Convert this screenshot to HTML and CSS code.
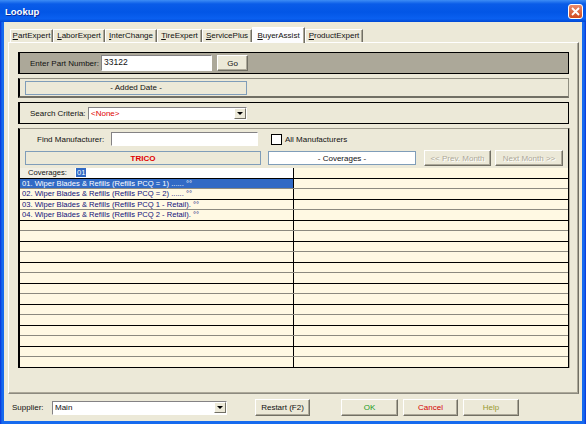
FILE: index.html
```html
<!DOCTYPE html>
<html>
<head>
    <meta charset="utf-8" />
    <title>Lookup</title>
    <link rel="stylesheet" href="styles.css">
</head>
<body>
<div class="window">
    <div class="titlebar">
        <span class="title">Lookup</span>
        <span class="close">
            <svg width="9" height="9" viewBox="0 0 9 9"><path d="M1 1 L8 8 M8 1 L1 8" stroke="#fff" stroke-width="1.8" fill="none"/></svg>
        </span>
    </div>
    <div class="client">
        <div class="tabs">
            <span class="tab w43"><u>P</u>artExpert</span>
            <span class="tab w52"><u>L</u>aborExpert</span>
            <span class="tab w52"><u>I</u>nterChange</span>
            <span class="tab w45"><u>T</u>ireExpert</span>
            <span class="tab w50"><u>S</u>ervicePlus</span>
            <span class="tab w53 active"><u>B</u>uyerAssist</span>
            <span class="tab w58"><u>P</u>roductExpert</span>
        </div>
        <div class="panel">
            <div class="bar part">
                <span class="label part-label">Enter Part Number:</span>
                <span class="field part-field">33122</span>
                <span class="button go">Go</span>
            </div>
            <div class="bar date">
                <span class="flat date-field">- Added Date -</span>
            </div>
            <div class="bar search">
                <span class="label search-label">Search Criteria:</span>
                <span class="combo search-combo"><span class="combo-text red">&lt;None&gt;</span><span class="drop"></span></span>
            </div>
            <div class="lower">
                <div class="find-row">
                    <span class="label find-label">Find Manufacturer:</span>
                    <span class="field find-field"></span>
                    <span class="check"></span>
                    <span class="label">All Manufacturers</span>
                </div>
                <div class="info-row">
                    <span class="flat trico">TRICO</span>
                    <span class="flat coverages">- Coverages -</span>
                    <span class="button disabled prev">&lt;&lt; Prev. Month</span>
                    <span class="button disabled next">Next Month &gt;&gt;</span>
                </div>
                <div class="list">
                    <div class="row head">
                        <div class="cell left"><span class="head-label">Coverages:</span><span class="head-input"><span class="sel">01</span></span></div>
                        <div class="cell right"></div>
                    </div>
                    <div class="row"><div class="cell left selected">01. Wiper Blades &amp; Refills (Refills PCQ = 1) ...... °°</div><div class="cell right"></div></div>
                    <div class="row"><div class="cell left">02. Wiper Blades &amp; Refills (Refills PCQ = 2) ...... °°</div><div class="cell right"></div></div>
                    <div class="row"><div class="cell left">03. Wiper Blades &amp; Refills (Refills PCQ 1 - Retail). °°</div><div class="cell right"></div></div>
                    <div class="row"><div class="cell left">04. Wiper Blades &amp; Refills (Refills PCQ 2 - Retail). °°</div><div class="cell right"></div></div>
                    <div class="row"><div class="cell left"></div><div class="cell right"></div></div>
                    <div class="row"><div class="cell left"></div><div class="cell right"></div></div>
                    <div class="row"><div class="cell left"></div><div class="cell right"></div></div>
                    <div class="row"><div class="cell left"></div><div class="cell right"></div></div>
                    <div class="row"><div class="cell left"></div><div class="cell right"></div></div>
                    <div class="row"><div class="cell left"></div><div class="cell right"></div></div>
                    <div class="row"><div class="cell left"></div><div class="cell right"></div></div>
                    <div class="row"><div class="cell left"></div><div class="cell right"></div></div>
                    <div class="row"><div class="cell left"></div><div class="cell right"></div></div>
                    <div class="row"><div class="cell left"></div><div class="cell right"></div></div>
                    <div class="row"><div class="cell left"></div><div class="cell right"></div></div>
                    <div class="row"><div class="cell left"></div><div class="cell right"></div></div>
                    <div class="row"><div class="cell left"></div><div class="cell right"></div></div>
                    <div class="row"><div class="cell left"></div><div class="cell right"></div></div>
                </div>
            </div>
        </div>
        <div class="footer">
            <span class="label supplier-label">Supplier:</span>
            <span class="combo supplier-combo"><span class="combo-text">Main</span><span class="drop"></span></span>
            <span class="button restart">Restart (F2)</span>
            <span class="button ok">OK</span>
            <span class="button cancel">Cancel</span>
            <span class="button help">Help</span>
        </div>
    </div>
</div>
</body>
</html>
```

FILE: styles.css
```css
* {
    box-sizing: border-box;
}
body {
    margin: 0;
    background: #fff;
    font-family: "Liberation Sans", Arial, sans-serif;
    font-size: 8px;
    color: #111;
}
.window {
    width: 586px;
    height: 424px;
    display: flex;
    flex-direction: column;
    background: linear-gradient(to right, #0831d9 0, #166aee 2px, #166aee 584px, #0831d9 586px);
}
.titlebar {
    height: 22px;
    display: flex;
    align-items: center;
    justify-content: space-between;
    padding: 0 3px 0 5px;
    background: linear-gradient(#3d8df5 0, #0a5ce8 18%, #0256e6 55%, #0a60f0 85%, #0048d4 100%);
}
.title {
    color: #fff;
    font-weight: bold;
    font-size: 9.5px;
    text-shadow: 1px 1px #0a2a9a;
}
.close {
    width: 15px;
    height: 15px;
    display: flex;
    align-items: center;
    justify-content: center;
    border: 1px solid #fff;
    border-radius: 3px;
    background: linear-gradient(#e98b6c, #d14a1e);
}
.client {
    flex: 1;
    margin: 0 4px 3px 4px;
    padding: 5px 3px 0 4px;
    background: #ece9d8;
    display: flex;
    flex-direction: column;
}

/* tabs */
.tabs {
    height: 15px;
    display: flex;
    align-items: flex-end;
    padding-left: 2px;
    position: relative;
    z-index: 1;
}
.tab {
    height: 13px;
    line-height: 12px;
    text-align: center;
    background: #ece9d8;
    border-top: 1px solid #fff;
    border-left: 1px solid #fff;
    border-right: 1px solid #716f64;
    box-shadow: inset -1px 0 #aca899;
    white-space: nowrap;
}
.tab.active {
    height: 16px;
    margin-bottom: -1px;
    line-height: 15px;
    background: #fcfcfe;
}
.w43 { width: 43px; }
.w45 { width: 45px; }
.w50 { width: 50px; }
.w52 { width: 52px; }
.w53 { width: 53px; }
.w58 { width: 58px; }

.panel {
    height: 352px;
    padding: 9px;
    border: 1px solid;
    border-color: #fff #716f64 #8c8a7f #fff;
    box-shadow: inset -1px -1px #aca899;
}

/* top bars */
.bar {
    display: flex;
    align-items: center;
    border: 1px solid #000;
    border-left-width: 2px;
    margin-bottom: 4px;
}
.part {
    height: 22px;
    background: #aca899;
    padding-left: 10px;
}
.date {
    height: 20px;
    border-color: #8f8d80 #8f8d80 #716f64 #000;
    border-bottom-width: 2px;
    padding-left: 5px;
}
.search {
    height: 22px;
    padding-left: 10px;
}
.label {
    white-space: nowrap;
}
.part-label {
    width: 71px;
}
.search-label {
    width: 58px;
}
.field {
    background: #fff;
    border: 1px solid;
    border-color: #848284 #fff #fff #848284;
    padding-left: 2px;
    line-height: 12px;
    height: 16px;
    font-size: 8.5px;
}
.part-field {
    width: 111px;
}
.button {
    display: flex;
    align-items: center;
    justify-content: center;
    height: 17px;
    background: #ece9d8;
    border: 1px solid;
    border-color: #fff #716f64 #716f64 #fff;
    box-shadow: inset -1px -1px #aca899;
    white-space: nowrap;
}
.go {
    width: 31px;
    height: 16px;
    margin-left: 5px;
}
.flat {
    display: flex;
    align-items: center;
    justify-content: center;
    height: 14px;
    border: 1px solid #7f9db9;
    background: #ece9d8;
}
.date-field {
    width: 222px;
}
.combo {
    display: flex;
    align-items: center;
    height: 13px;
    background: #fff;
    border: 1px solid;
    border-color: #848284 #fff #fff #848284;
}
.combo-text {
    flex: 1;
    padding-left: 2px;
}
.red {
    color: #e00000;
}
.drop {
    width: 12px;
    height: 11px;
    background: #ece9d8;
    border: 1px solid;
    border-color: #fff #716f64 #716f64 #fff;
    display: flex;
    align-items: center;
    justify-content: center;
}
.drop:after {
    content: "";
    border-left: 3px solid transparent;
    border-right: 3px solid transparent;
    border-top: 3px solid #000;
}
.search-combo {
    width: 159px;
}

/* lower section */
.lower {
    height: 240px;
    border-top: 1px solid #9d9a8c;
    border-left: 2px solid #000;
    border-right: 1px solid #000;
    box-shadow: 1px 0 #aca899;
    padding-top: 3px;
}
.find-row {
    height: 14px;
    display: flex;
    align-items: center;
    padding-left: 17px;
}
.find-label {
    width: 74px;
}
.find-field {
    width: 147px;
    height: 14px;
}
.check {
    width: 11px;
    height: 11px;
    margin: 0 3px 0 13px;
    border: 1px solid #000;
    background: #fff;
}
.info-row {
    height: 16px;
    margin-top: 4px;
    display: flex;
    align-items: center;
    padding-left: 5px;
}
.trico {
    width: 236px;
    color: #e00000;
    font-weight: bold;
}
.coverages {
    width: 148px;
    margin-left: 7px;
    background: #fff;
}
.disabled {
    color: #aca899;
    text-shadow: 1px 1px #fff;
    height: 16px;
}
.prev {
    width: 67px;
    margin-left: 8px;
}
.next {
    width: 68px;
    margin-left: 4px;
}
.list {
    margin-top: 2px;
    height: 200px;
    background: #fff9e3;
}
.row {
    display: flex;
    height: 10px;
    border-bottom: 1px solid #8c8a7f;
}
.row:nth-child(odd) {
    height: 11px;
    border-bottom-color: #000;
}
.cell {
    font-size: 7.6px;
    line-height: 9px;
    white-space: nowrap;
    overflow: hidden;
}
.left {
    width: 274px;
    border-right: 1px solid #000;
    padding-left: 2px;
    color: #10107a;
}
.right {
    flex: 1;
}
.selected {
    background: #316ac5;
    color: #fff;
}
.head .left {
    display: flex;
    padding-left: 0;
    color: #111;
}
.head-label {
    width: 55px;
    padding-left: 8px;
    background: #f1efe4;
}
.head-input {
    flex: 1;
    background: #fff;
    padding-left: 1px;
}
.sel {
    background: #316ac5;
    color: #fff;
    padding: 0 1px;
}

/* footer */
.footer {
    flex: 1;
    display: flex;
    align-items: center;
    padding-left: 4px;
}
.supplier-label {
    width: 40px;
}
.supplier-combo {
    width: 175px;
    height: 14px;
}
.restart {
    width: 55px;
    margin-left: 28px;
}
.ok {
    width: 57px;
    margin-left: 31px;
    color: #1a9a1a;
}
.cancel {
    width: 55px;
    margin-left: 5px;
    color: #d40000;
}
.help {
    width: 56px;
    margin-left: 5px;
    color: #9a9a30;
}
```
